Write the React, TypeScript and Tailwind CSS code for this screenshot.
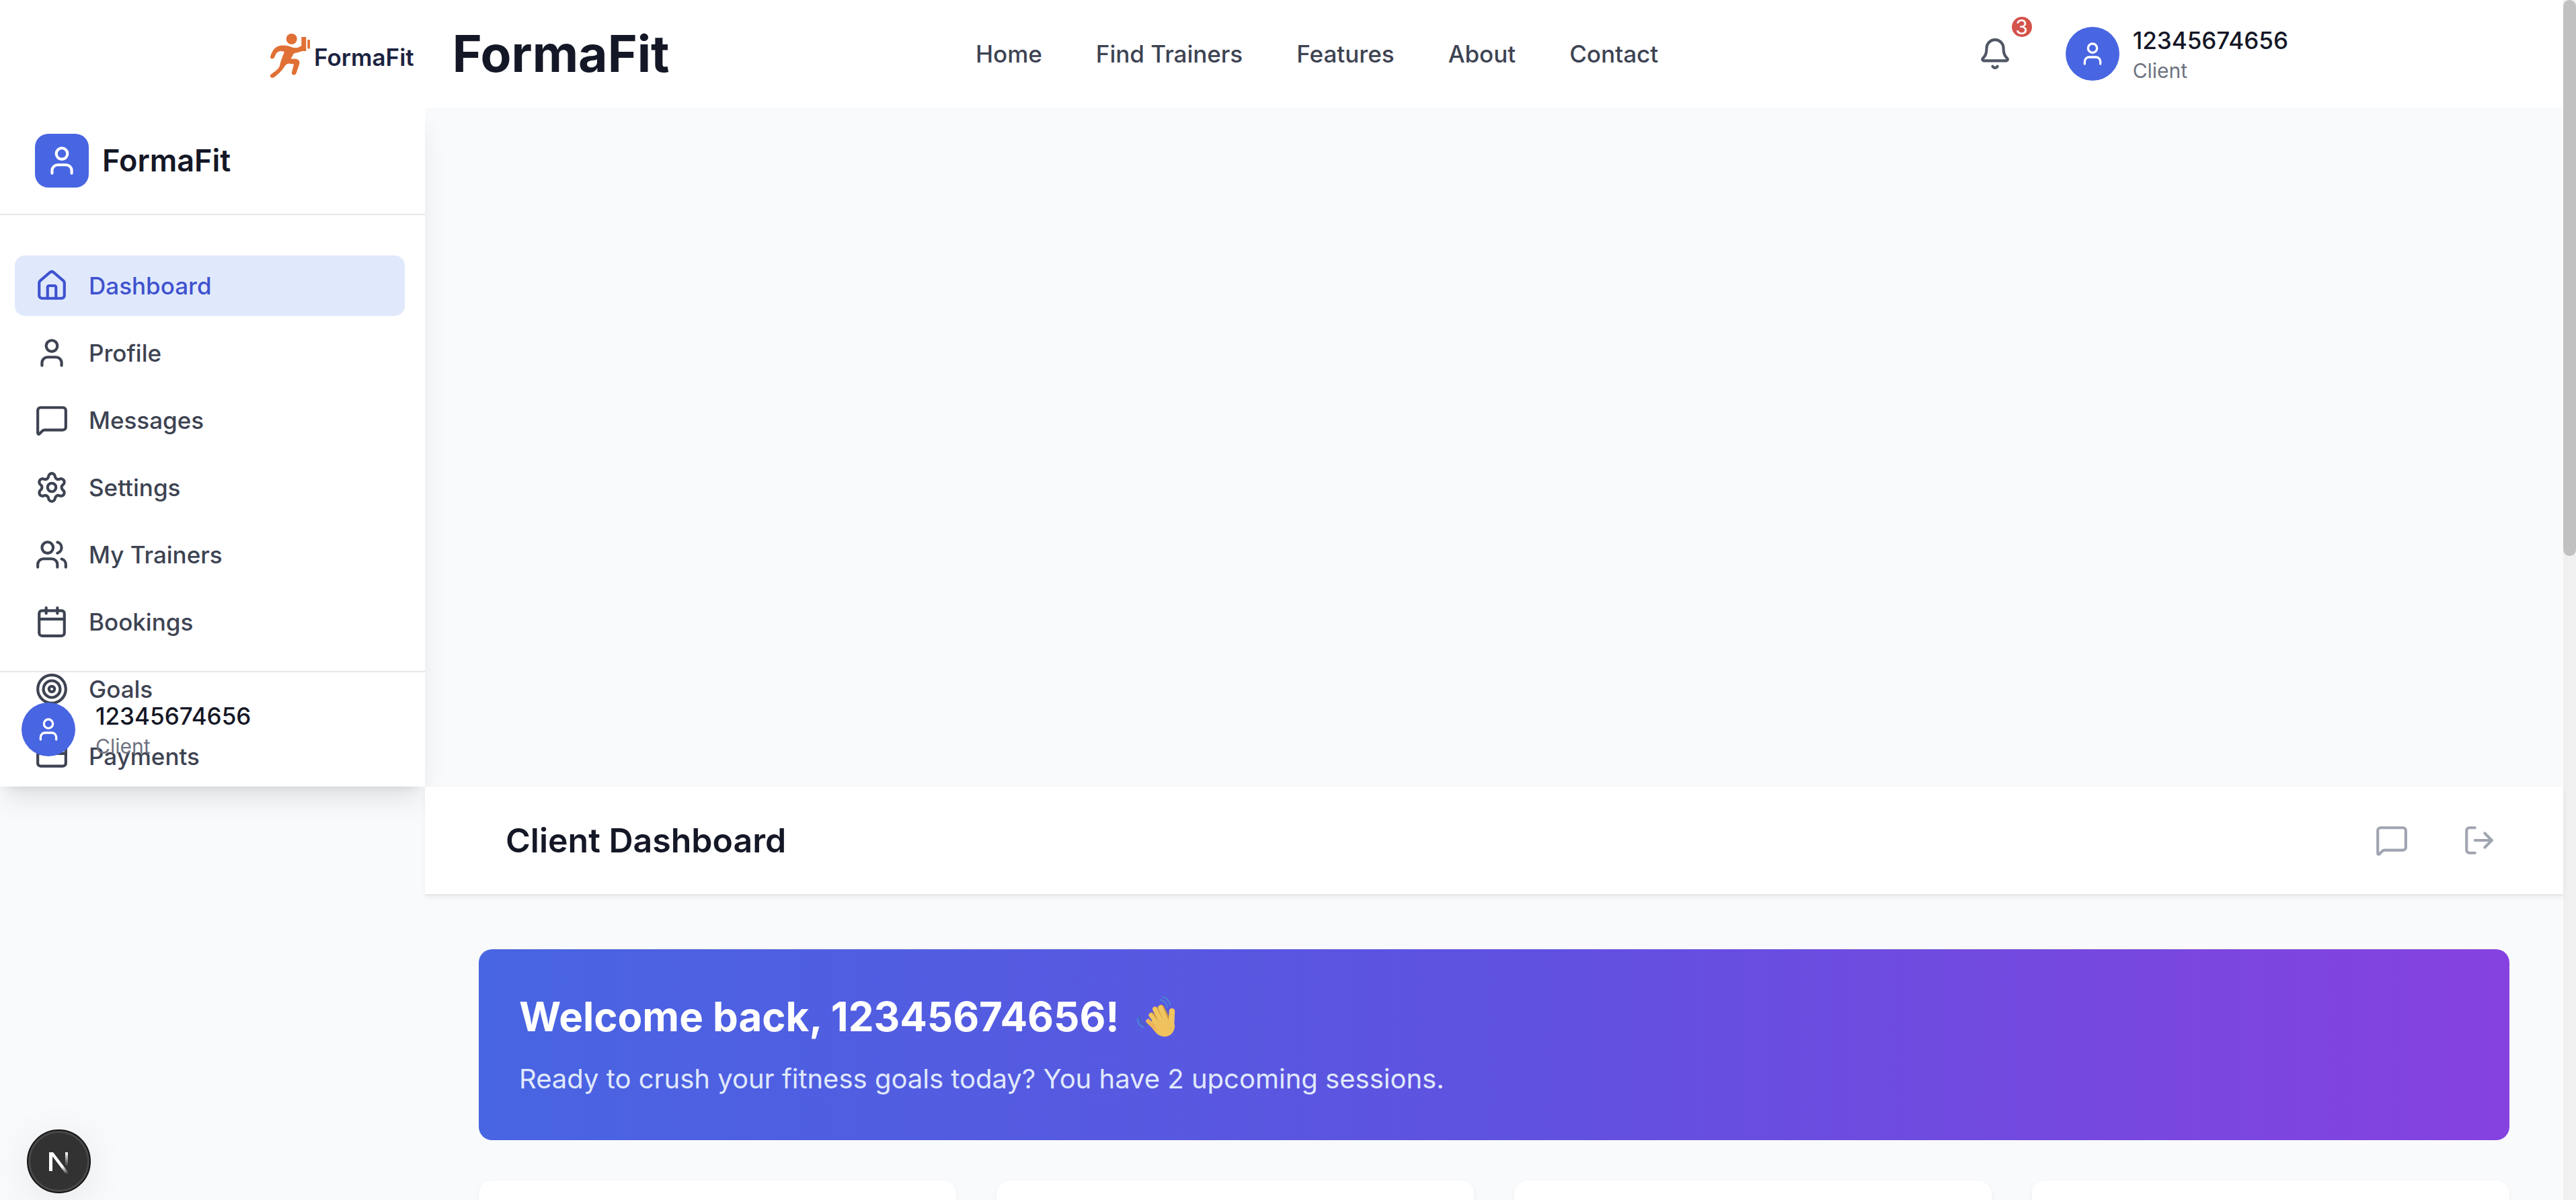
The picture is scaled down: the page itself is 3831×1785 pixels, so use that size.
import React from "react";
import {
  Bell,
  Calendar,
  CreditCard,
  House,
  LogOut,
  MessageSquare,
  Settings,
  Target,
  User,
  Users,
  type LucideIcon,
} from "lucide-react";

const topLinks = ["Home", "Find Trainers", "Features", "About", "Contact"];

const sideLinks: { label: string; icon: LucideIcon; active?: boolean }[] = [
  { label: "Dashboard", icon: House, active: true },
  { label: "Profile", icon: User },
  { label: "Messages", icon: MessageSquare },
  { label: "Settings", icon: Settings },
  { label: "My Trainers", icon: Users },
  { label: "Bookings", icon: Calendar },
  { label: "Goals", icon: Target },
  { label: "Payments", icon: CreditCard },
];

function Runner() {
  return (
    <svg viewBox="0 0 61 68" className="h-[68px] w-[61px]" aria-hidden="true">
      <circle cx="32.700" cy="9" r="8" fill="#e07035" />
      <path
        d="M1.200 35C4 25 9 19.500 17 18.700C23 18 29 19.500 34 21.500C39 23 44 22 47.300 19V6H54.300V27H48C43 29 39 29.500 36 30.500L31.500 38.500H37C43 38.500 45.500 42 44 47L39.500 60C38 64 32 63 33 58.500L36 46.500L28.500 45.500C25 46 23 48 21.500 51C18 57 12 62 6 66.500C2 68 -1 64.500 2 61.500C8 57 13 54 15 49C16 42 19 36 22 28C16 26 12 27.500 9.500 31L7 36.500C5 40 0 38.500 1.200 35Z"
        fill="#e07035"
      />
      <rect x="56.300" y="10" width="3.700" height="13.500" rx="1" fill="#e07035" />
    </svg>
  );
}

function Wave() {
  return (
    <svg viewBox="0 0 60 60" className="h-[60px] w-[60px]" aria-label="waving hand" role="img">
      <path
        d="M20 39L28 30L42 28L49 35L52 40L56 42C57 52 50 60 41 60C33 60 28 55 23 48Z"
        fill="#eec05c"
      />
      <g fill="none" strokeLinecap="round" stroke="#c8913f">
        <path d="M36 17L44 33" strokeWidth="9" />
        <path d="M28 20L37 37" strokeWidth="8.500" />
        <path d="M22 28L33 42" strokeWidth="8" />
      </g>
      <g fill="none" strokeLinecap="round" stroke="#f1c55f">
        <path d="M35 17L43 36" strokeWidth="7.500" />
        <path d="M26.500 19L36 38" strokeWidth="7" />
        <path d="M20.500 28L32 43" strokeWidth="6.500" />
        <path d="M16.500 37L30 50" strokeWidth="6.500" stroke="#efb45a" />
        <path d="M52 22L51 42" strokeWidth="8.500" />
      </g>
      <ellipse cx="41" cy="46" rx="13" ry="12.500" fill="#efc25d" />
      <g fill="none" stroke="#4596cc" strokeLinecap="round" strokeWidth="1.600">
        <path d="M38 1C44 2 48 7 49 13" />
        <path d="M34 5C40 6 44 10 45 17" />
        <path d="M1 33C1 39 4 44 9 46" />
        <path d="M4 30C5 37 9 42 15 43" stroke="#3c6cab" />
      </g>
    </svg>
  );
}

function Avatar() {
  return (
    <span className="flex size-20 shrink-0 items-center justify-center rounded-full bg-[#4865e2] text-white">
      <User className="size-10" />
    </span>
  );
}

function UserText() {
  return (
    <span className="flex flex-col text-left">
      <span className="text-[35px] leading-[50px] font-medium text-[#141726]">12345674656</span>
      <span className="text-[30px] leading-[40px] text-[#6e7380]">Client</span>
    </span>
  );
}

function TopBar() {
  return (
    <header className="bg-white">
      <div className="mx-auto flex h-40 max-w-[3208px] items-center justify-between pr-[87px] pl-[99px]">
        <a href="#" className="flex items-center gap-[57px]">
          <span className="flex items-center gap-[5px] pt-1.5">
            <Runner />
            <span className="pt-1 text-[35px] leading-[50px] font-semibold text-[#1b2340]">FormaFit</span>
          </span>
          <span className="text-[75px] leading-[90px] font-bold text-[#141726]">FormaFit</span>
        </a>
        <nav className="flex items-center gap-20">
          {topLinks.map((label) => (
            <a key={label} href="#" className="text-[35px] leading-[50px] font-medium text-[#3d4352]">
              {label}
            </a>
          ))}
        </nav>
        <div className="flex items-center gap-15">
          <button type="button" aria-label="Notifications" className="relative p-5 text-[#505664]">
            <Bell className="size-[50px]" />
            <span className="absolute -top-2.5 -right-2.5 flex size-[30px] items-center justify-center rounded-full bg-[#d4534a] text-[30px] leading-[30px] text-white">
              3
            </span>
          </button>
          <button type="button" className="flex items-center gap-5 pr-5">
            <Avatar />
            <UserText />
          </button>
        </div>
      </div>
    </header>
  );
}

function Sidebar() {
  return (
    <aside className="relative w-[632px] shrink-0 self-start bg-white shadow-[0_25px_38px_-8px_rgba(0,0,0,0.1),0_10px_15px_-10px_rgba(0,0,0,0.1)]">
      <div className="flex h-40 items-center gap-5 border-b-2 border-[#e5e6eb] pl-[52px]">
        <span className="flex size-20 items-center justify-center rounded-[20px] bg-[#4865e2] text-white">
          <User className="size-[50px]" />
        </span>
        <span className="text-[45px] leading-[70px] font-semibold text-[#141726]">FormaFit</span>
      </div>
      <nav className="flex flex-col gap-2.5 pt-15 pr-[30px] pl-[22px]">
        {sideLinks.map(({ label, icon: Icon, active }) => (
          <a
            key={label}
            href="#"
            className={
              active
                ? "flex items-center gap-[30px] rounded-[15px] bg-[#e0e9fc] px-[30px] py-5 text-[35px] leading-[50px] font-medium text-[#3f52cf]"
                : "flex items-center gap-[30px] rounded-[15px] px-[30px] py-5 text-[35px] leading-[50px] font-medium text-[#3d4352]"
            }
          >
            <Icon className="size-[50px]" />
            {label}
          </a>
        ))}
      </nav>
      <div className="absolute inset-x-0 bottom-0 flex items-center gap-[30px] border-t-2 border-[#e5e6eb] py-10 pl-8">
        <Avatar />
        <UserText />
      </div>
    </aside>
  );
}

function NextBadge() {
  return (
    <button
      type="button"
      aria-label="Open developer tools"
      className="fixed bottom-2.5 left-10 z-20 flex size-[95px] items-center justify-center rounded-full border-2 border-[#151515] bg-[#323232] shadow-[inset_0_0_0_3px_#484848,0_10px_60px_rgba(0,0,0,0.08)]"
    >
      <svg viewBox="0 0 30 36" className="h-9 w-[30px]" aria-hidden="true">
        <defs>
          <linearGradient id="diag" x1="14" y1="18" x2="28" y2="36" gradientUnits="userSpaceOnUse">
            <stop offset="0.400" stopColor="#fff" />
            <stop offset="1" stopColor="#fff" stopOpacity="0" />
          </linearGradient>
          <linearGradient id="stem" x1="0" y1="4" x2="0" y2="25" gradientUnits="userSpaceOnUse">
            <stop offset="0" stopColor="#fff" />
            <stop offset="1" stopColor="#fff" stopOpacity="0" />
          </linearGradient>
        </defs>
        <rect x="24" y="4" width="4" height="21" fill="url(#stem)" />
        <path d="M0 4H6L31 37L27 39L5 10V32H0Z" fill="url(#diag)" />
      </svg>
    </button>
  );
}

export default function App() {
  return (
    <div className="flex h-screen overflow-hidden bg-[#f9fafc] font-[Inter,sans-serif]">
      <div className="min-w-0 flex-1">
        <TopBar />
        <div className="flex">
          <Sidebar />
          <main className="relative mt-[1010px] min-w-0 flex-1">
            <div className="flex items-center justify-between border-b-2 border-[#e5e6e9] bg-white py-[35px] pr-20 pl-30 shadow-[0_3px_8px_rgba(0,0,0,0.06)]">
              <h1 className="text-[50px] leading-[70px] font-semibold text-[#141726]">Client Dashboard</h1>
              <div className="flex gap-10 text-[#a0a5b1]">
                <button type="button" aria-label="Messages" className="p-5">
                  <MessageSquare className="size-[50px]" />
                </button>
                <button type="button" aria-label="Log out" className="p-5">
                  <LogOut className="size-[50px]" />
                </button>
              </div>
            </div>
            <div className="flex flex-col gap-15 p-20">
              <section className="rounded-[20px] bg-linear-to-r/srgb from-[#4865e2] via-[#5f52e0] to-[#8642e0] p-15">
                <h2 className="flex h-20 items-center gap-[26px] text-[60px] leading-[80px] font-bold text-white">
                  Welcome back, 12345674656!
                  <Wave />
                </h2>
                <p className="mt-[22px] text-[40px] leading-[62px] text-[#e0e9fc]">
                  Ready to crush your fitness goals today? You have 2 upcoming sessions.
                </p>
              </section>
              <div className="grid grid-cols-4 gap-15">
                {[0, 1, 2, 3].map((i) => (
                  <div key={i} className="h-80 rounded-[20px] bg-white shadow-[0_3px_8px_rgba(0,0,0,0.05)]" />
                ))}
              </div>
            </div>
          </main>
        </div>
      </div>
      <div className="w-[19px] shrink-0 bg-[#f0f0f0]">
        <div className="h-[827px] rounded-[10px] bg-[#c1c1c1]" />
      </div>
      <NextBadge />
    </div>
  );
}
